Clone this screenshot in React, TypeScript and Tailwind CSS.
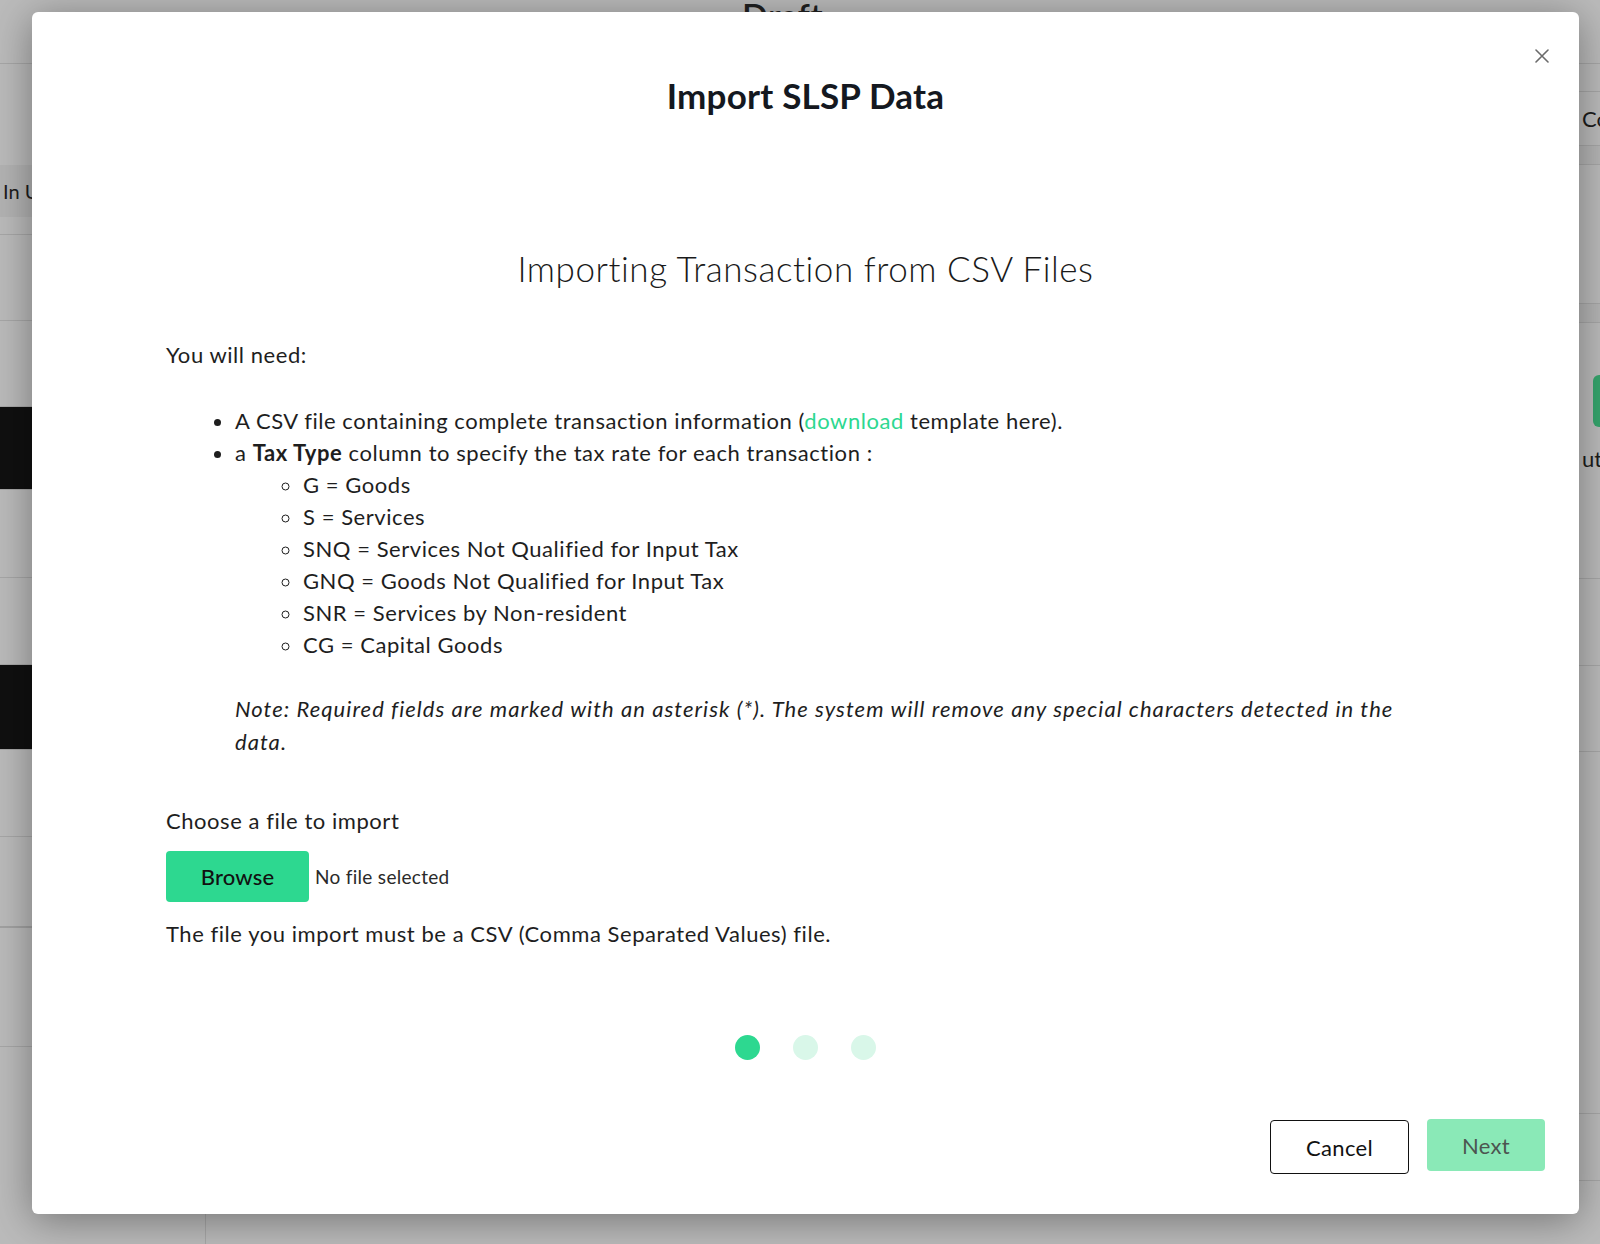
import { useState } from "react";

const leftRows = [
  { h: "h-[171px]", dark: false, label: "In U", band: true },
  { h: "h-[86px]", dark: false },
  { h: "h-[86px]", dark: false },
  { h: "h-[83px]", dark: true },
  { h: "h-[88px]", dark: false },
  { h: "h-[87px]", dark: false },
  { h: "h-[85px]", dark: true },
  { h: "h-[87px]", dark: false },
  { h: "h-[91px]", dark: false, thick: true },
  { h: "h-[119px]", dark: false },
];

const taxTypes = [
  "G = Goods",
  "S = Services",
  "SNQ = Services Not Qualified for Input Tax",
  "GNQ = Goods Not Qualified for Input Tax",
  "SNR = Services by Non-resident",
  "CG = Capital Goods",
];

function BackgroundPage() {
  return (
    <div className="flex h-[1244px] w-full flex-col overflow-hidden bg-[#bbbbbb] font-['Lato',sans-serif] text-[#1c1c1c]">
      {/* page header */}
      <div className="h-[64px] shrink-0 border-b border-[#a7a7a7]">
        <div className="-mt-[4px] pl-[742px] text-[34px] font-semibold leading-[40px] tracking-[0.4px] text-[#202020]">
          Draft
        </div>
      </div>

      <div className="flex flex-1">
        {/* sidebar list */}
        <div className="flex w-[206px] shrink-0 flex-col border-r border-[#a7a7a7]">
          {leftRows.map((r, i) => (
            <div
              key={i}
              className={`${r.h} shrink-0 ${
                r.dark ? "bg-[#101010]" : ""
              } ${r.thick ? "border-b-2 border-[#a2a2a2]" : "border-b border-[#a7a7a7]"} flex flex-col`}
            >
              {r.band && (
                <div className="mt-[101px] flex h-[52px] items-center bg-[#b3b3b3] pl-[3px] text-[20px]">
                  {r.label}
                </div>
              )}
            </div>
          ))}
        </div>

        <div className="flex-1" />

        {/* right side table */}
        <div className="flex w-[60px] shrink-0 flex-col">
          <div className="h-[28px] shrink-0 border-b border-[#a7a7a7]" />
          <div className="flex h-[54px] shrink-0 items-center border-b border-[#a7a7a7] pl-[42px] text-[22px]">
            Co
          </div>
          <div className="h-[19px] shrink-0 border-b border-[#a7a7a7] bg-[#b5b5b5]" />
          <div className="h-[139px] shrink-0 border-b border-[#a7a7a7]" />
          <div className="h-[19px] shrink-0 border-b border-[#a7a7a7] bg-[#b5b5b5]" />
          <div className="flex h-[256px] shrink-0 flex-col border-b border-[#a7a7a7] pl-[53px]">
            <div className="mt-[52px] h-[52px] w-[20px] rounded-l-[6px] bg-[#36a56d]" />
            <div className="-ml-[11px] mt-[20px] text-[22px] leading-[24px]">ut</div>
          </div>
          <div className="h-[87px] shrink-0 border-b border-[#a7a7a7]" />
          <div className="h-[86px] shrink-0 border-b border-[#a7a7a7]" />
          <div className="h-[362px] shrink-0 border-b border-[#a7a7a7]" />
          <div className="h-[67px] shrink-0 border-b border-[#a7a7a7]" />
        </div>
      </div>
    </div>
  );
}

function StepDots({ active }: { active: number }) {
  return (
    <div className="flex justify-center gap-[33px]">
      {[0, 1, 2].map((i) => (
        <span
          key={i}
          className={`h-[25px] w-[25px] rounded-full ${
            i === active ? "bg-[#2dd890]" : "bg-[#d9f7e9]"
          }`}
        />
      ))}
    </div>
  );
}

function ImportModal() {
  const [fileName] = useState<string | null>(null);

  return (
    <div className="absolute left-[32px] top-[12px] flex h-[1202px] w-[1547px] flex-col rounded-[6px] bg-white font-['Lato',sans-serif] text-[#1e1e1e] shadow-[0_6px_40px_rgba(0,0,0,0.38)]">
      <button className="absolute right-[30px] top-[37px] p-0" aria-label="Close">
        <svg width="14" height="14" viewBox="0 0 14 14" fill="none">
          <path d="M1 1L13 13M13 1L1 13" stroke="#6b6b6b" strokeWidth="1.6" strokeLinecap="round" />
        </svg>
      </button>

      <h2 className="mt-[63px] text-center text-[35px] font-bold leading-[40px] tracking-[0.2px] text-[#141820]">
        Import SLSP Data
      </h2>

      <h3 className="mt-[131px] text-center text-[35px] font-light leading-[44px] tracking-[0.55px] text-[#1a1a1a]">
        Importing Transaction from CSV Files
      </h3>

      <div className="mt-[49px] px-[134px] text-[22px] leading-[32px] tracking-[0.55px]">
        <p>You will need:</p>

        <ul className="mt-[34px] list-disc pl-[69px]">
          <li>
            A CSV file containing complete transaction information (
            <a href="#" className="text-[#2dd890]">
              download
            </a>{" "}
            template here).
          </li>
          <li>
            a <b className="font-bold">Tax Type</b> column to specify the tax rate for each transaction :
            <ul className="list-[circle] pl-[68px]">
              {taxTypes.map((t) => (
                <li key={t}>{t}</li>
              ))}
            </ul>
          </li>
        </ul>

        <p className="mt-[31px] pl-[69px] pr-[30px] italic leading-[33px] tracking-[1.05px]">
          Note: Required fields are marked with an asterisk (*). The system will remove any special
          characters detected in the data.
        </p>

        <p className="mt-[47px]">Choose a file to import</p>

        <div className="mt-[14px] flex items-center">
          <label className="flex h-[51px] w-[143px] cursor-pointer items-center justify-center rounded-[4px] bg-[#2dd890] text-[22px] font-medium tracking-[0.2px] text-[#111]">
            Browse
            <input type="file" accept=".csv" className="hidden" />
          </label>
          <span className="ml-[6px] text-[19px] tracking-[0.3px] text-[#2a2a2a]">
            {fileName ?? "No file selected"}
          </span>
        </div>

        <p className="mt-[16px]">The file you import must be a CSV (Comma Separated Values) file.</p>
      </div>

      <div className="mt-[85px]">
        <StepDots active={0} />
      </div>

      <div className="mt-auto mb-[40px] flex items-start justify-end gap-[18px] pr-[34px]">
        <button className="mt-[1px] h-[54px] w-[139px] rounded-[4px] border-[1.5px] border-[#111] bg-white text-[22px] tracking-[0.3px] text-[#111]">
          Cancel
        </button>
        <button className="h-[52px] w-[118px] rounded-[4px] bg-[#8ae9b7] text-[22px] tracking-[0.3px] text-[#4c5550]">
          Next
        </button>
      </div>
    </div>
  );
}

export default function App() {
  return (
    <div className="relative h-[1244px] w-full overflow-hidden">
      <BackgroundPage />
      <ImportModal />
    </div>
  );
}
